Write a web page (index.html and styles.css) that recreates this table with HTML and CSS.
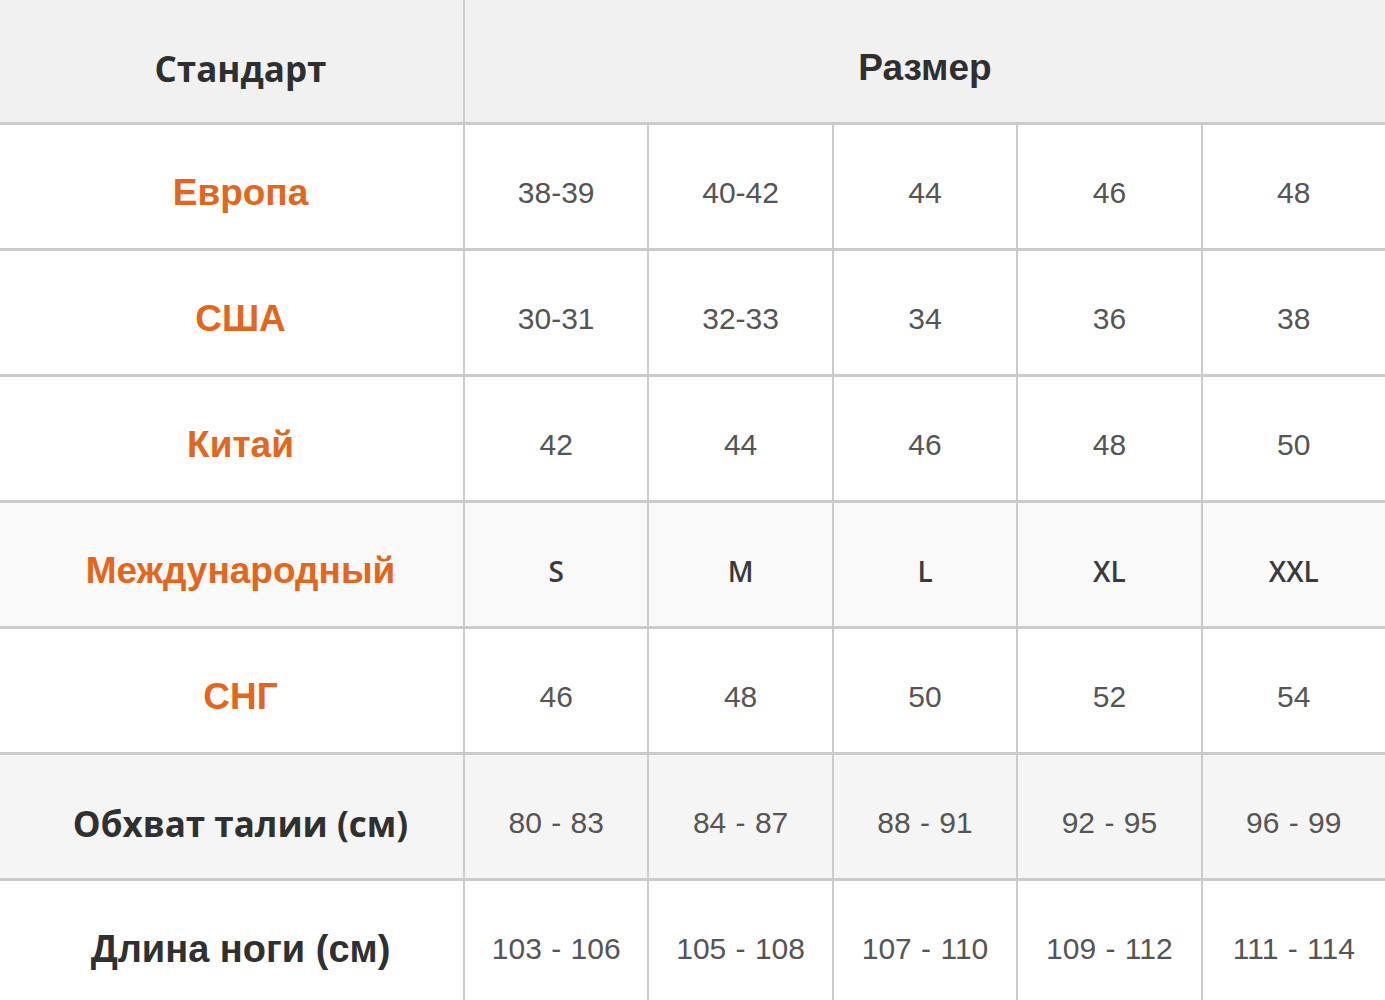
FILE: index.html
```
<!DOCTYPE html>
<html lang="ru">
<head>
<meta charset="utf-8">
<title>Таблица размеров</title>
<link rel="stylesheet" href="styles.css">
</head>
<body>
<div class="chart">
  <div class="cell head first label-os">Стандарт</div>
  <div class="cell head span5 label-ar">Размер</div>

  <div class="cell label first orange">Европа</div>
  <div class="cell num">38-39</div><div class="cell num">40-42</div><div class="cell num">44</div><div class="cell num">46</div><div class="cell num">48</div>

  <div class="cell label first orange">США</div>
  <div class="cell num">30-31</div><div class="cell num">32-33</div><div class="cell num">34</div><div class="cell num">36</div><div class="cell num">38</div>

  <div class="cell label first orange">Китай</div>
  <div class="cell num">42</div><div class="cell num">44</div><div class="cell num">46</div><div class="cell num">48</div><div class="cell num">50</div>

  <div class="cell label first orange alt">Международный</div>
  <div class="cell letter alt">S</div><div class="cell letter alt">M</div><div class="cell letter alt">L</div><div class="cell letter alt">XL</div><div class="cell letter alt">XXL</div>

  <div class="cell label first orange">СНГ</div>
  <div class="cell num">46</div><div class="cell num">48</div><div class="cell num">50</div><div class="cell num">52</div><div class="cell num">54</div>

  <div class="cell label first dark label-os shade">Обхват талии (см)</div>
  <div class="cell num shade">80 - 83</div><div class="cell num shade">84 - 87</div><div class="cell num shade">88 - 91</div><div class="cell num shade">92 - 95</div><div class="cell num shade">96 - 99</div>

  <div class="cell label first dark label-ar">Длина ноги (см)</div>
  <div class="cell num">103 - 106</div><div class="cell num">105 - 108</div><div class="cell num">107 - 110</div><div class="cell num">109 - 112</div><div class="cell num">111 - 114</div>
</div>
</body>
</html>
```
FILE: styles.css
```
html, body {
  margin: 0;
  padding: 0;
  background: #ffffff;
}
body {
  width: 1385px;
  height: 1000px;
  overflow: hidden;
}
.chart {
  display: grid;
  grid-template-columns: 463px repeat(5, 1fr);
  grid-template-rows: 122px repeat(7, 123px);
  column-gap: 2px;
  row-gap: 3px;
  background: #cbcbcb;
  width: 1385px;
}
.cell {
  background: #ffffff;
  display: flex;
  align-items: center;
  justify-content: center;
  box-sizing: border-box;
  padding-top: 13px;
}
.first {
  padding-left: 18px;
}
.head {
  background: #f1f1f1;
  color: #2f2f2f;
  font-size: 35px;
  font-weight: 700;
  padding-top: 14px;
}
.span5 {
  grid-column: span 5;
}
.label-os {
  font-family: "Open Sans", "Noto Sans", sans-serif;
  font-weight: 700;
}
.label-ar {
  font-family: "Liberation Sans", Arial, sans-serif;
  font-weight: 700;
}
.span5.label-ar {
  font-size: 37px;
}
.label {
  font-size: 36px;
  font-weight: 700;
}
.orange {
  font-family: "Liberation Sans", Arial, sans-serif;
  color: #e4661c;
  font-size: 37px;
}
.dark {
  color: #303030;
  font-size: 35px;
}
.dark.label-ar {
  font-size: 38px;
}
.num {
  font-family: "Liberation Sans", Arial, sans-serif;
  font-size: 30px;
  color: #555555;
  word-spacing: 1px;
}
.letter {
  font-family: "Open Sans", "Noto Sans", sans-serif;
  font-size: 28px;
  font-weight: 600;
  color: #3a3a3a;
}
.alt {
  background: #f9f9f9;
}
.shade {
  background: #f5f5f5;
}
```
